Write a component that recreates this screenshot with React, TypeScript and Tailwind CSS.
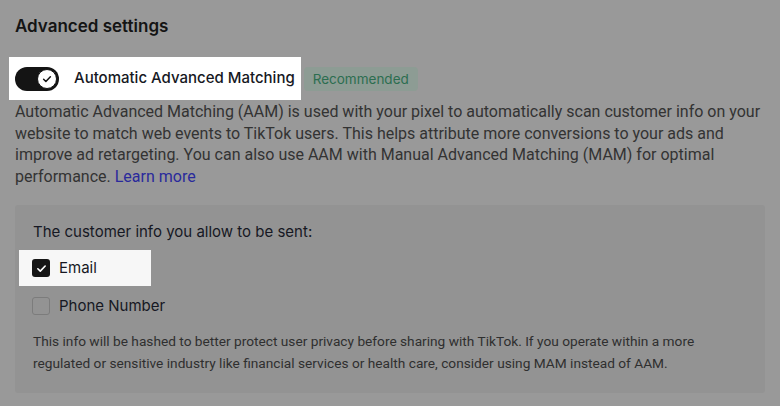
import React from "react";

const CheckMark = ({ className }: { className?: string }) => (
  <svg viewBox="0 0 16 16" className={className} fill="none">
    <path d="M3.5 8.3l3 3 6-6.3" stroke="currentColor" strokeWidth="2" strokeLinecap="round" strokeLinejoin="round" />
  </svg>
);

const App = () => {
  return (
    <div
      className="w-[780px] h-[406px] overflow-hidden bg-[#999999] px-[15px] text-[#161616]"
      style={{ fontFamily: "Inter, 'Noto Sans', sans-serif" }}
    >
      <h2 className="pt-[14px] text-[17px] leading-6 font-semibold text-[#141414]">Advanced settings</h2>

      {/* toggle row */}
      <div className="mt-[19px] flex items-center">
        <div className="-ml-[6px] flex h-[43px] items-center gap-[15px] bg-white pl-[6px] pr-[6px]">
          <div className="flex h-6 w-11 items-center justify-end rounded-full bg-[#141414] px-[2px]">
            <div className="flex h-5 w-5 items-center justify-center rounded-full border-[1.5px] border-[#141414] bg-white text-[#141414]">
              <CheckMark className="h-3 w-3" />
            </div>
          </div>
          <span className="text-[15px] font-medium text-[#161823]">Automatic Advanced Matching</span>
        </div>
        <span className="ml-[3px] rounded-[4px] bg-[#8d9c94] px-[9px] py-[3px] text-[13.5px] leading-[18px] text-[#2c6e50]">
          Recommended
        </span>
      </div>

      <p
        className="mt-[1px] text-[16px] leading-[21.5px] text-[#333333]"
        style={{ fontFamily: "Roboto, sans-serif" }}
      >
        Automatic Advanced Matching (AAM) is used with your pixel to automatically scan customer info on your website to
        match web events to TikTok users. This helps attribute more conversions to your ads and improve ad retargeting.
        You can also use AAM with Manual Advanced Matching (MAM) for optimal performance.{" "}
        <span className="text-[#2a2a9c]">Learn more</span>
      </p>

      {/* customer info card */}
      <div className="mt-[18px] h-[188px] rounded-[3px] bg-[#939393] px-[18px] pt-[18px]">
        <div className="text-[15px] leading-[18px] text-[#161823]">The customer info you allow to be sent:</div>

        <div className="-ml-[14px] mt-[9px] flex h-[36px] w-[132px] items-center gap-[9px] bg-[#f7f7f7] pl-[13px]">
          <div className="flex h-[18px] w-[18px] items-center justify-center rounded-[3px] bg-[#161616] text-white">
            <CheckMark className="h-[13px] w-[13px]" />
          </div>
          <span className="text-[15px] text-[#161823]">Email</span>
        </div>

        <div className="-ml-[1px] mt-[2px] flex h-[36px] items-center gap-[9px]">
          <div className="h-[18px] w-[18px] rounded-[3px] border border-[#7c7c7c]" />
          <span className="text-[15px] text-[#161823]">Phone Number</span>
        </div>

        <p
          className="mt-[6px] text-[13.7px] leading-[22px] text-[#2f2f2f]"
          style={{ fontFamily: "Roboto, sans-serif" }}
        >
          This info will be hashed to better protect user privacy before sharing with TikTok. If you operate within a more
          regulated or sensitive industry like financial services or health care, consider using MAM instead of AAM.
        </p>
      </div>
    </div>
  );
};

export default App;
